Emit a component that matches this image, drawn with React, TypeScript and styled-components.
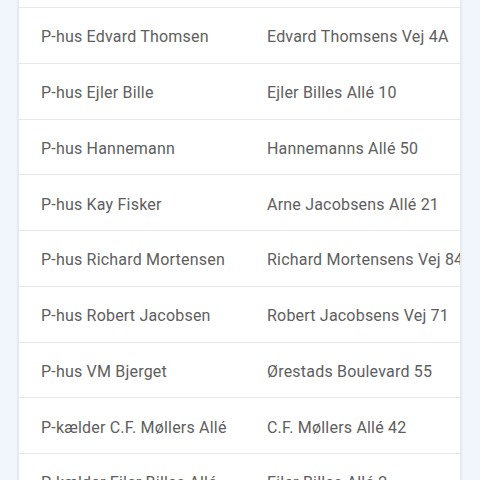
import styled, { createGlobalStyle } from 'styled-components'

const GlobalStyle = createGlobalStyle`
  html, body {
    margin: 0;
    padding: 0;
    background: #f1f6fc;
    overflow: hidden;
  }
`

const Page = styled.main`
  width: 480px;
  height: 480px;
  overflow: hidden;
  padding: 0 18px 0 18px;
  box-sizing: border-box;
`

const Card = styled.div`
  width: 443px;
  padding-top: 7px;
  background: #ffffff;
  overflow: hidden;
  box-shadow: 0 0 2px rgba(0, 0, 0, 0.12);
  border-left: 1px solid #e6e9ee;
  border-right: 1px solid #e6e9ee;
  box-sizing: border-box;
`

const Row = styled.div`
  display: grid;
  grid-template-columns: 226px 1fr;
  align-items: center;
  height: 55.75px;
  box-sizing: border-box;
  padding: 3px 0 0 22px;
  border-top: 1.5px solid #e8e8e8;
  font-family: Roboto, 'Liberation Sans', sans-serif;
  font-size: 16px;
  letter-spacing: 0.2px;
  color: #5e5e5e;
  white-space: nowrap;
`

const Cell = styled.span``

const garages = [
  ['P-hus Edvard Thomsen', 'Edvard Thomsens Vej 4A'],
  ['P-hus Ejler Bille', 'Ejler Billes Allé 10'],
  ['P-hus Hannemann', 'Hannemanns Allé 50'],
  ['P-hus Kay Fisker', 'Arne Jacobsens Allé 21'],
  ['P-hus Richard Mortensen', 'Richard Mortensens Vej 84'],
  ['P-hus Robert Jacobsen', 'Robert Jacobsens Vej 71'],
  ['P-hus VM Bjerget', 'Ørestads Boulevard 55'],
  ['P-kælder C.F. Møllers Allé', 'C.F. Møllers Allé 42'],
  ['P-kælder Ejler Billes Allé', 'Ejler Billes Allé 2'],
]

export default function App() {
  return (
    <>
      <GlobalStyle />
      <Page>
        <Card>
          {garages.map(([name, address]) => (
            <Row key={name}>
              <Cell>{name}</Cell>
              <Cell>{address}</Cell>
            </Row>
          ))}
        </Card>
      </Page>
    </>
  )
}
